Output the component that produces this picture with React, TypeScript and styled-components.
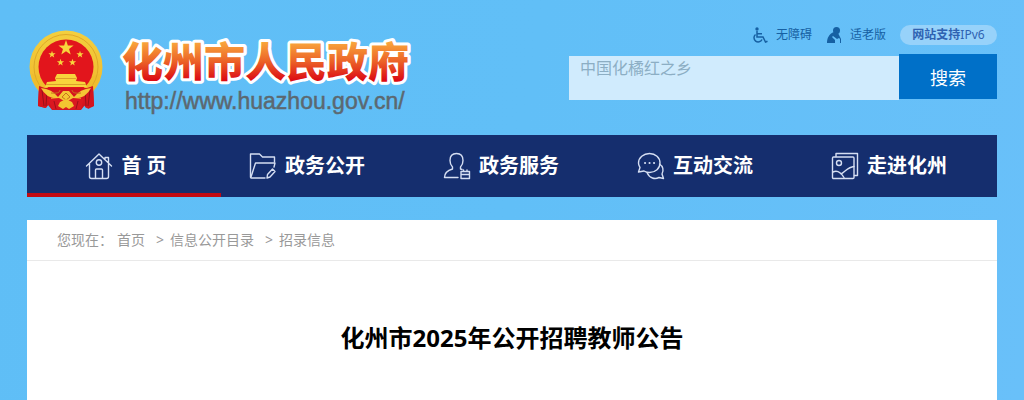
import React from "react";
import styled, { createGlobalStyle } from "styled-components";

const GlobalStyle = createGlobalStyle`
  * { box-sizing: border-box; }
  body {
    margin: 0;
    background: linear-gradient(100deg, #5fbef6 0%, #61bff7 50%, #69c0f9 100%);
    font-family: "Noto Sans", "Noto Sans CJK SC", sans-serif;
  }
  a { color: inherit; text-decoration: none; }
`;

const Page = styled.div`
  min-height: 100vh;
  display: flex;
  flex-direction: column;
  padding: 0 27px;
`;

const Header = styled.header`
  display: flex;
  justify-content: space-between;
  align-items: flex-start;
  padding: 25px 0 21px;
`;

const Brand = styled.a`
  display: flex;
  align-items: flex-start;
  gap: 16px;
  padding: 4px 0 0 2px;
`;

const BrandText = styled.span`
  display: flex;
  flex-direction: column;
`;

const SiteUrl = styled.span`
  font: 23px/26px "Liberation Sans", Arial, sans-serif;
  color: #5c6870;
  -webkit-text-stroke: 0.5px #5c6870;
  padding-left: 6px;
`;

const Tools = styled.div`
  display: flex;
  flex-direction: column;
  gap: 9px;
  width: 428px;
  max-width: 50%;
`;

const ToolRow = styled.div`
  display: flex;
  justify-content: flex-end;
  align-items: center;
  gap: 14px;
  height: 20px;
`;

const ToolLink = styled.a`
  display: flex;
  align-items: center;
  gap: 8px;
  font-size: 12px;
  line-height: 20px;
  color: #1660a3;
`;

const Pill = styled.a`
  width: 97px;
  border-radius: 10px;
  background: #97d2fa;
  color: #2f62b1;
  font-size: 12px;
  line-height: 20px;
  text-align: center;
  white-space: nowrap;
`;

const SearchForm = styled.form`
  display: flex;
  align-items: flex-start;
`;

const SearchInput = styled.input`
  flex: 1;
  min-width: 0;
  height: 44px;
  margin-top: 2px;
  padding: 0 11px 22px;
  border: 0;
  border-radius: 0;
  outline: 0;
  background: #d0ebfd;
  color: #8caec4;
  font: 16px/22px "Noto Sans CJK SC", sans-serif;
  &::placeholder { color: #8caec4; opacity: 1; }
`;

const SearchButton = styled.button`
  width: 98px;
  height: 45px;
  border: 0;
  padding: 0;
  background: #0070c8;
  color: #fff;
  font: 18px/24px "Noto Sans CJK SC", sans-serif;
  cursor: pointer;
`;

const Nav = styled.nav`
  display: grid;
  grid-template-columns: repeat(5, 1fr);
  background: #152e6e;
`;

const NavItem = styled.a<{ $active?: boolean }>`
  height: 62px;
  display: flex;
  align-items: center;
  justify-content: center;
  gap: 8px;
  padding: ${(p) => (p.$active ? "3px 0 0 4px" : "0 22px 1px 0")};
  border-bottom: ${(p) => (p.$active ? "4px solid #c20a12" : "0")};
  color: #fff;
  font-size: 20px;
  font-weight: 700;
  line-height: 28px;
  white-space: nowrap;
`;

const NavIcon = styled.svg`
  width: 28px;
  height: 28px;
  flex: none;
  fill: none;
  stroke: #d5def2;
  stroke-width: 1.4;
  stroke-linejoin: round;
  stroke-linecap: round;
`;

const Panel = styled.main`
  flex: 1;
  margin-top: 23px;
  background: #fff;
`;

const Breadcrumb = styled.nav`
  display: flex;
  height: 41px;
  padding-left: 30px;
  border-bottom: 1px solid #e9e9e9;
  color: #999;
  font-size: 14px;
  line-height: 40px;
`;

const Prefix = styled.span`
  margin-right: 4px;
`;

const Crumb = styled.a`
  margin-right: 11px;
`;

const Separator = styled.span`
  margin-right: 6px;
`;

const Title = styled.h1`
  margin: 0;
  padding: 60px 30px 44px;
  text-align: center;
  color: #000;
  font-size: 24px;
  line-height: 34px;
`;

const star = (cx: number, cy: number, r: number) =>
  Array.from({ length: 10 }, (_, i) => {
    const d = i % 2 ? r * 0.4 : r;
    const a = (Math.PI / 5) * i - Math.PI / 2;
    return `${(cx + d * Math.cos(a)).toFixed(2)},${(cy + d * Math.sin(a)).toFixed(2)}`;
  }).join(" ");

function Emblem() {
  return (
    <svg width="74" height="82" viewBox="0 0 74 82" aria-hidden="true">
      <defs>
        <linearGradient id="gold" x1="0" y1="0" x2="0" y2="1">
          <stop offset="0" stopColor="#f3cf3e" />
          <stop offset="1" stopColor="#f0b62a" />
        </linearGradient>
      </defs>
      <path d="M10 57 L9 77 L16 79 L19 76 L23 81 L52 81 L56 76 L59 80 L65 77 L64 57Z" fill="#cf1520" />
      <ellipse cx="37" cy="38" rx="36.5" ry="36.5" fill="url(#gold)" />
      <path d="M3 45 A35 35 0 0 0 12 62 L62 62 A35 35 0 0 0 71 45 L60 48 L14 48Z" fill="#efbd2c" />
      <ellipse cx="37" cy="38" rx="32" ry="32.5" fill="none" stroke="#dfa928" strokeWidth="1" />
      <circle cx="37" cy="38" r="27.5" fill="#e2151c" />
      <path d="M10 57 L22 61 L22 72 L17 79 L9 77Z M64 57 L52 61 L52 72 L57 79 L65 77Z" fill="#d5141e" />
      <path d="M13 61 L15 77 M18 62 L17 77 M61 61 L59 77 M56 62 L57 77" stroke="#98101a" strokeWidth="1" />
      <g fill="#f8d43c">
        <polygon points={star(37, 19, 8)} />
        <polygon points={star(23, 25.5, 3.8)} />
        <polygon points={star(51, 25.5, 3.8)} />
        <polygon points={star(31.5, 33.5, 3.8)} />
        <polygon points={star(43.5, 33.5, 3.8)} />
        <path d="M28 45 L46 45 L48 49 L47 52 L56 53 L58 58 L16 58 L18 53 L27 52 L26 49Z" />
      </g>
      <path d="M17 55.5H57 M27 49.5H47" stroke="#dda02a" strokeWidth="1" />
      <path d="M14 59 H60 L54 70 L47 67 L37 75 L27 67 L20 70Z" fill="#d5141e" />
      <path
        d="M12 59 Q23 60 29 68 L34 62 H40 L45 68 Q51 60 62 59 Q57 69 47 69 L41 73 H33 L27 69 Q17 69 12 59Z"
        fill="#f4c634"
      />
      <path d="M22 64 Q31 65 31 61 M52 64 Q43 65 43 61 M33 68 L37 64 L41 68 L37 71Z" fill="none" stroke="#c8721d" strokeWidth="1" />
      <path d="M19 70 L30 69 L37 73 L44 69 L55 70 L52 80 H23Z" fill="#da1820" />
      <path d="M31 73 L37 70 L43 73 L45 77 L40 80 L37 78 L34 80 L29 77Z" fill="#f2c431" />
      <path d="M25 72 L27 80 M49 72 L47 80" stroke="#9c111a" strokeWidth="1" />
    </svg>
  );
}

function SiteName() {
  return (
    <svg width="294" height="59" viewBox="0 0 294 59" role="img" aria-label="化州市人民政府">
      <defs>
        <linearGradient id="flame" gradientUnits="userSpaceOnUse" x1="0" y1="13" x2="0" y2="51">
          <stop offset="0" stopColor="#f9a63c" />
          <stop offset="0.5" stopColor="#ec6428" />
          <stop offset="1" stopColor="#dc0c14" />
        </linearGradient>
      </defs>
      <g fontFamily="'Noto Sans CJK SC', sans-serif" fontSize="41" fontWeight="900" strokeLinejoin="round">
        <text x="3" y="48" fill="url(#flame)" stroke="#fff" strokeWidth="6" paintOrder="stroke">
          化州市人民政府
        </text>
      </g>
    </svg>
  );
}

const icons = {
  home: (
    <>
      <path d="M1.5 14 14 2 26.5 14 M4.5 12V24.5a2 2 0 0 0 2 2h15a2 2 0 0 0 2-2V12 M20 7V5.5h3.5V11" />
      <circle cx="14" cy="10.5" r="2.7" />
      <path d="M10.5 26V18a1 1 0 0 1 1-1h5a1 1 0 0 1 1 1v8" />
    </>
  ),
  folder: (
    <>
      <path d="M16 26H2.5a1 1 0 0 1-1-1V2h9l3 3h12v5" />
      <path d="M2 25 6.5 11H26L25 15" />
      <path d="m18.5 22.5 5-5.5 2.5 2.5-5 5.5-3 1z" />
    </>
  ),
  person: (
    <>
      <path d="M15 25.5H1.500c0-4.500 3-7 8-8.500v-2C8 13.500 7 11 7 8.500 7 4.500 9 1.500 13.500 1.500s6.500 3 6.500 7c0 2.500-1 5-2.500 6.500v2l1.500.5" />
      <path d="M18 19.500h8.500v7H18zM18 22.500h8.500M20.500 18v1.500M24 18v1.500" />
    </>
  ),
  chat: (
    <>
      <path d="M12.500 1.500c6 0 10.500 4 10.500 9.500s-4.500 9.500-10.500 9.500c-2 0-4-.5-5.500-1.500l-5.500 1 1.500-4.500C2 14 1.500 12.500 1.500 11c0-5.500 5-9.500 11-9.500z" />
      <path d="M22.500 12c3.500 2 4.500 6.500 2.500 10l1.500 4.500-4.500-1c-4 2-9.500 1-12-5" />
      <path d="M8 11h.1M12.500 11h.1M17 11h.1" strokeWidth="2" />
    </>
  ),
  picture: (
    <>
      <rect x="1.5" y="5" width="21.5" height="21.5" rx="1" />
      <path d="M5 4.500v-3h21.500v22H23.500" />
      <circle cx="8" cy="11" r="2.500" />
      <path d="M2 20c3-1.500 7-1 11 5.500M10 22C14 20 17 15 23 14.500" />
    </>
  ),
};

const navItems: { label: string; icon: keyof typeof icons; active?: boolean }[] = [
  { label: "首 页", icon: "home", active: true },
  { label: "政务公开", icon: "folder" },
  { label: "政务服务", icon: "person" },
  { label: "互动交流", icon: "chat" },
  { label: "走进化州", icon: "picture" },
];

export default function App() {
  return (
    <>
      <GlobalStyle />
      <Page>
        <Header>
          <Brand href="#">
            <Emblem />
            <BrandText>
              <SiteName />
              <SiteUrl>http://www.huazhou.gov.cn/</SiteUrl>
            </BrandText>
          </Brand>
          <Tools>
            <ToolRow>
              <ToolLink href="#">
                <svg width="16" height="18" viewBox="0 0 16 18" fill="none" stroke="#1660a3" strokeWidth="1.5" aria-hidden="true">
                  <circle cx="5" cy="3" r="1.7" fill="#1660a3" stroke="none" />
                  <path d="M5 5v6h6l2.500 5 2-.8M5.500 7.800H10M3.500 8.500a4.200 4.200 0 1 0 6.500 5" />
                </svg>
                无障碍
              </ToolLink>
              <ToolLink href="#">
                <svg width="16" height="18" viewBox="0 0 16 18" fill="#1660a3" aria-hidden="true">
                  <circle cx="10.5" cy="4.500" r="3.500" />
                  <path d="M8 6C3 8 1 12 1 17h8v-3l-3-3 1-1 4 3 2-1 1 1v4h1v-4l-1-2-2-4z" />
                </svg>
                适老版
              </ToolLink>
              <Pill href="#">
                <b>网站支持</b>IPv6
              </Pill>
            </ToolRow>
            <SearchForm onSubmit={(e) => e.preventDefault()}>
              <SearchInput type="text" aria-label="搜索" placeholder="中国化橘红之乡" />
              <SearchButton type="submit">搜索</SearchButton>
            </SearchForm>
          </Tools>
        </Header>
        <Nav>
          {navItems.map((item) => (
            <NavItem key={item.label} href="#" $active={item.active}>
              <NavIcon viewBox="0 0 28 28" aria-hidden="true">
                {icons[item.icon]}
              </NavIcon>
              {item.label}
            </NavItem>
          ))}
        </Nav>
        <Panel>
          <Breadcrumb>
            <Prefix>您现在：</Prefix>
            <Crumb href="#">首页</Crumb>
            <Separator>&gt;</Separator>
            <Crumb href="#">信息公开目录</Crumb>
            <Separator>&gt;</Separator>
            <Crumb href="#">招录信息</Crumb>
          </Breadcrumb>
          <Title>化州市2025年公开招聘教师公告</Title>
        </Panel>
      </Page>
    </>
  );
}
